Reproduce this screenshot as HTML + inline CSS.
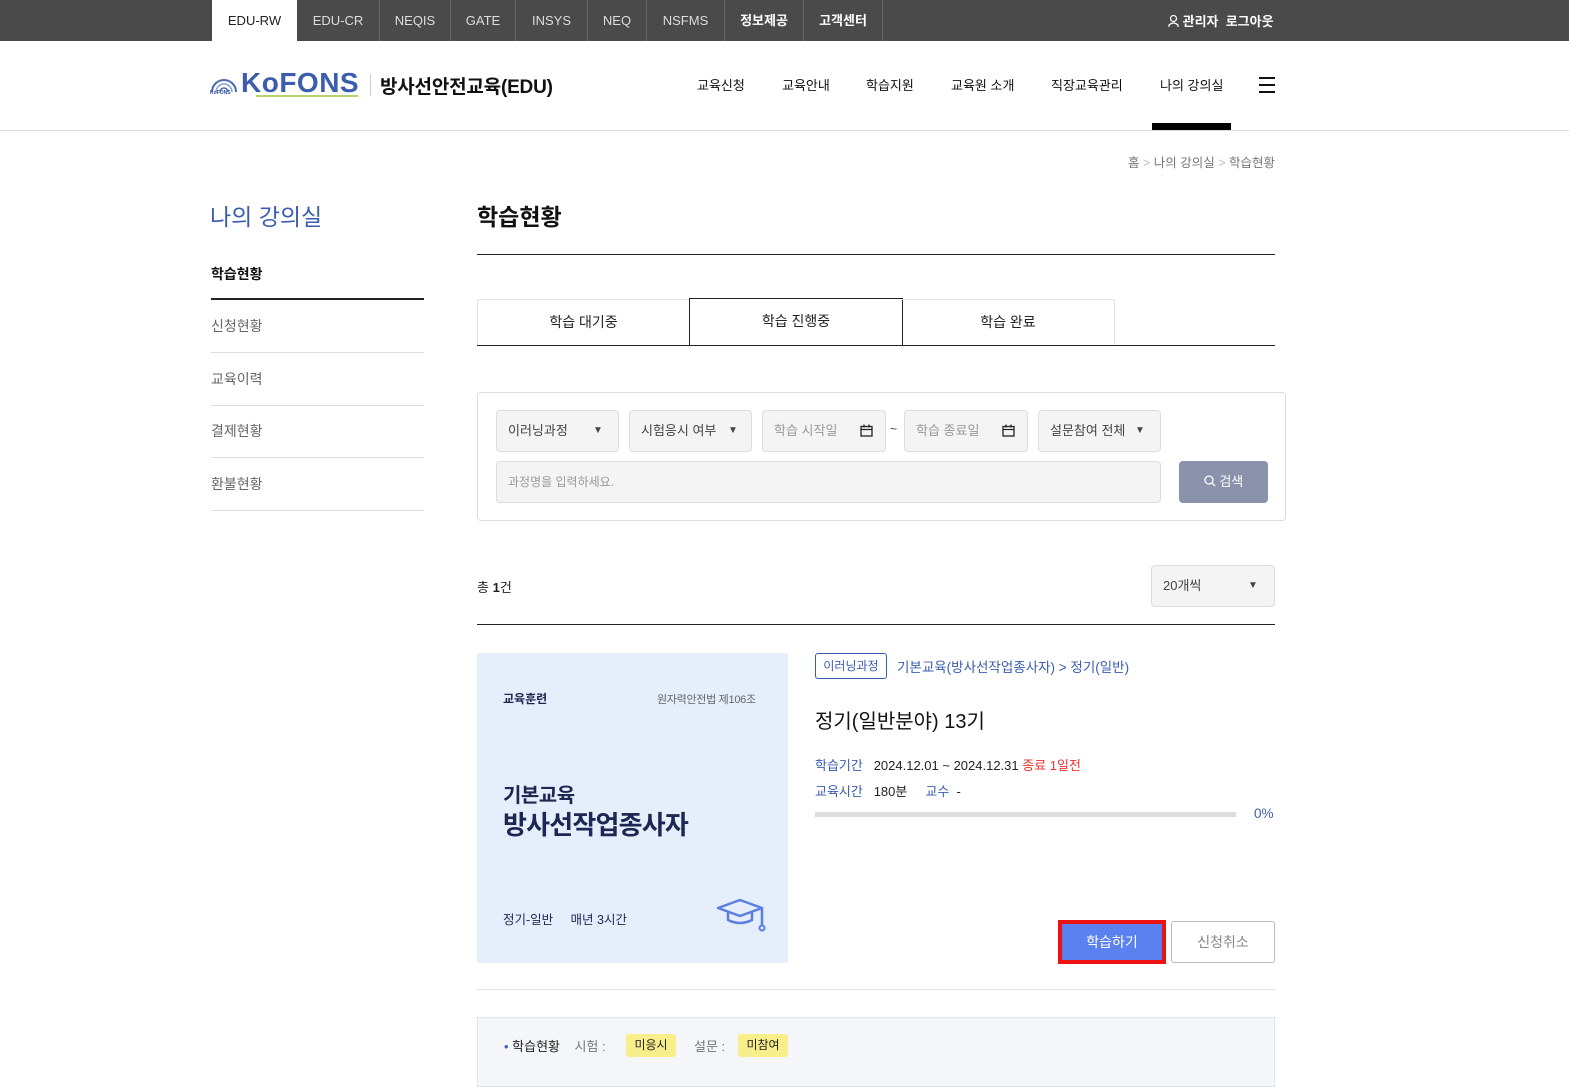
<!DOCTYPE html>
<html><head><meta charset="utf-8"><style>
*{margin:0;padding:0;box-sizing:border-box}
body{width:1569px;height:1080px;overflow:hidden;background:#fff;font-family:"Liberation Sans","Noto Sans CJK KR",sans-serif;color:#222;position:relative}
.a{position:absolute;white-space:nowrap}
.top{left:0;top:0;width:1569px;height:41px;background:#4a4a4a}
.tab{top:0;height:41px;line-height:41px;text-align:center;color:#ddd;font-size:13px;border-right:1px solid #666}
.sel{border:1px solid #ddd;border-radius:4px;background:#f4f4f4;height:42px;font-size:13px;color:#444;line-height:40px;padding-left:11px}
.ph{color:#999}
</style></head><body>
<div class="a top"></div>
<div class="a tab" style="left:212px;width:85px;background:#fff;color:#222;border:none">EDU-RW</div>
<div class="a tab" style="left:297px;width:83px">EDU-CR</div>
<div class="a tab" style="left:380px;width:71px">NEQIS</div>
<div class="a tab" style="left:451px;width:65px">GATE</div>
<div class="a tab" style="left:516px;width:72px">INSYS</div>
<div class="a tab" style="left:588px;width:59px">NEQ</div>
<div class="a tab" style="left:647px;width:78px">NSFMS</div>
<div class="a tab" style="left:725px;width:79px;color:#fff;font-weight:bold">정보제공</div>
<div class="a tab" style="left:804px;width:79px;color:#fff;font-weight:bold">고객센터</div>
<div class="a" style="left:1168px;top:11px;font-size:13px;color:#fff;font-weight:bold"><svg width="11" height="12" viewBox="0 0 11 12" style="vertical-align:-1px"><circle cx="5.5" cy="3.5" r="3" fill="none" stroke="#fff" stroke-width="1.2"/><path d="M1 12 L1 10 Q5.5 6 10 10 L10 12" fill="none" stroke="#fff" stroke-width="1.2"/></svg> 관리자 &nbsp;로그아웃</div>

<svg class="a" style="left:210px;top:72px" width="28" height="24" viewBox="0 0 28 24"><path d="M2 20 A12 12 0 0 1 26 20" fill="none" stroke="#4a6bb5" stroke-width="2"/><path d="M6 20 A8 8 0 0 1 22 20" fill="none" stroke="#8aa0cc" stroke-width="1.5"/><path d="M10 20 A4 4 0 0 1 18 20" fill="none" stroke="#4a6bb5" stroke-width="1.5"/></svg>
<div class="a" style="left:210px;top:90px;font-size:5px;color:#2c4d9c;font-weight:bold">KoFONS</div>
<div class="a" style="left:241px;top:67px;font-size:28px;font-weight:bold;color:#3a5daf;letter-spacing:0.5px">KoFONS</div>
<div class="a" style="left:256px;top:95px;width:102px;height:2px;background:#b6d36b"></div>
<div class="a" style="left:370px;top:74px;width:1px;height:22px;background:#ccc"></div>
<div class="a" style="left:380px;top:72px;font-size:19px;font-weight:bold;color:#111;letter-spacing:-0.2px">방사선안전교육(EDU)</div>

<div class="a" style="left:697px;top:75px;font-size:13px;color:#111">교육신청</div>
<div class="a" style="left:782px;top:75px;font-size:13px;color:#111">교육안내</div>
<div class="a" style="left:866px;top:75px;font-size:13px;color:#111">학습지원</div>
<div class="a" style="left:951px;top:75px;font-size:13px;color:#111">교육원 소개</div>
<div class="a" style="left:1051px;top:75px;font-size:13px;color:#111">직장교육관리</div>
<div class="a" style="left:1160px;top:75px;font-size:13px;color:#111">나의 강의실</div>
<div class="a" style="left:1259px;top:77px;width:16px;height:2px;background:#111"></div>
<div class="a" style="left:1259px;top:84px;width:16px;height:2px;background:#111"></div>
<div class="a" style="left:1259px;top:91px;width:16px;height:2px;background:#111"></div>
<div class="a" style="left:1152px;top:123px;width:79px;height:7px;background:#000"></div>
<div class="a" style="left:0;top:130px;width:1569px;height:1px;background:#ddd"></div>

<div class="a" style="right:294px;top:152px;font-size:12.5px;color:#777">홈 <span style="color:#bbb">&gt;</span> 나의 강의실 <span style="color:#bbb">&gt;</span> 학습현황</div>

<div class="a" style="left:210px;top:198px;font-size:23px;color:#3a5daf">나의 강의실</div>
<div class="a" style="left:211px;top:264px;font-size:14px;color:#111;font-weight:bold">학습현황</div>
<div class="a" style="left:211px;top:298px;width:213px;height:2px;background:#222"></div>
<div class="a" style="left:211px;top:316px;font-size:14px;color:#666">신청현황</div>
<div class="a" style="left:211px;top:352px;width:213px;height:1px;background:#ddd"></div>
<div class="a" style="left:211px;top:369px;font-size:14px;color:#666">교육이력</div>
<div class="a" style="left:211px;top:405px;width:213px;height:1px;background:#ddd"></div>
<div class="a" style="left:211px;top:421px;font-size:14px;color:#666">결제현황</div>
<div class="a" style="left:211px;top:457px;width:213px;height:1px;background:#ddd"></div>
<div class="a" style="left:211px;top:474px;font-size:14px;color:#666">환불현황</div>
<div class="a" style="left:211px;top:510px;width:213px;height:1px;background:#ddd"></div>

<div class="a" style="left:477px;top:198px;font-size:23px;color:#111;font-weight:bold">학습현황</div>
<div class="a" style="left:477px;top:254px;width:798px;height:1px;background:#222"></div>

<div class="a" style="left:477px;top:299px;width:213px;height:47px;border:1px solid #e3e3e3;border-bottom:none;text-align:center;line-height:45px;font-size:14px">학습 대기중</div>
<div class="a" style="left:689px;top:298px;width:214px;height:48px;border:1px solid #222;border-bottom:none;text-align:center;line-height:44px;font-size:14px;background:#fff">학습 진행중</div>
<div class="a" style="left:902px;top:299px;width:213px;height:47px;border:1px solid #e3e3e3;border-bottom:none;border-left:none;text-align:center;line-height:45px;font-size:14px">학습 완료</div>
<div class="a" style="left:477px;top:345px;width:798px;height:1px;background:#222"></div>

<div class="a" style="left:477px;top:392px;width:809px;height:129px;border:1px solid #ddd;border-radius:4px"></div>
<div class="a sel" style="left:496px;top:410px;width:123px">이러닝과정<span class="a" style="left:96px;font-size:10px">▼</span></div>
<div class="a sel" style="left:629px;top:410px;width:123px">시험응시 여부<span class="a" style="left:98px;font-size:10px">▼</span></div>
<div class="a sel ph" style="left:762px;top:410px;width:124px">학습 시작일<svg class="a" style="left:97px;top:13px" width="13" height="13" viewBox="0 0 13 13"><rect x="1" y="2.5" width="11" height="9.5" fill="none" stroke="#222" stroke-width="1.3"/><path d="M1 5.5H12M4 0.5V3.5M9 0.5V3.5" stroke="#222" stroke-width="1.3"/></svg></div>
<div class="a" style="left:890px;top:422px;font-size:12px;color:#444">~</div>
<div class="a sel ph" style="left:904px;top:410px;width:124px">학습 종료일<svg class="a" style="left:97px;top:13px" width="13" height="13" viewBox="0 0 13 13"><rect x="1" y="2.5" width="11" height="9.5" fill="none" stroke="#222" stroke-width="1.3"/><path d="M1 5.5H12M4 0.5V3.5M9 0.5V3.5" stroke="#222" stroke-width="1.3"/></svg></div>
<div class="a sel" style="left:1038px;top:410px;width:123px">설문참여 전체<span class="a" style="left:96px;font-size:10px">▼</span></div>
<div class="a sel ph" style="left:496px;top:461px;width:665px;font-size:12px">과정명을 입력하세요.</div>
<div class="a" style="left:1179px;top:461px;width:89px;height:42px;border-radius:4px;background:#8a93ab;color:#fff;font-size:13px;text-align:center;line-height:42px"><svg width="12" height="12" viewBox="0 0 12 12" style="vertical-align:-1px"><circle cx="5" cy="5" r="4" fill="none" stroke="#fff" stroke-width="1.3"/><path d="M8 8L11 11" stroke="#fff" stroke-width="1.3"/></svg> 검색</div>

<div class="a" style="left:477px;top:577px;font-size:13px;color:#222">총 <b>1</b>건</div>
<div class="a sel" style="left:1151px;top:565px;width:124px;height:42px;background:#f4f4f4">20개씩<span class="a" style="left:96px;font-size:10px">▼</span></div>
<div class="a" style="left:477px;top:624px;width:798px;height:1px;background:#222"></div>

<div class="a" style="left:477px;top:653px;width:311px;height:310px;background:#e5eefb"></div>
<div class="a" style="left:503px;top:690px;font-size:12px;font-weight:bold;color:#1c2752">교육훈련</div>
<div class="a" style="left:657px;top:691px;font-size:11px;color:#666;letter-spacing:-0.3px">원자력안전법 제106조</div>
<div class="a" style="left:503px;top:779px;font-size:20px;font-weight:bold;color:#1c2752;letter-spacing:-0.5px">기본교육</div>
<div class="a" style="left:503px;top:805px;font-size:26px;font-weight:bold;color:#1c2752;letter-spacing:-0.8px">방사선작업종사자</div>
<div class="a" style="left:503px;top:909px;font-size:12.5px;color:#1c2752">정기-일반 &nbsp;&nbsp;&nbsp;&nbsp;매년 3시간</div>
<svg class="a" style="left:716px;top:898px" width="54" height="34" viewBox="0 0 54 34"><path d="M2 10 L24 2 L46 10 L24 18 Z" fill="none" stroke="#5b7fe0" stroke-width="2.5" stroke-linejoin="round"/><path d="M12 14 V22 Q24 28 36 22 V14" fill="none" stroke="#5b7fe0" stroke-width="2.5"/><path d="M46 10 V28" stroke="#5b7fe0" stroke-width="2.5"/><circle cx="46" cy="30" r="2.5" fill="none" stroke="#5b7fe0" stroke-width="2"/></svg>

<div class="a" style="left:815px;top:653px;width:72px;height:26px;border:1px solid #3a5daf;border-radius:3px;font-size:12px;color:#3a5daf;text-align:center;line-height:24px">이러닝과정</div>
<div class="a" style="left:897px;top:656px;font-size:13.5px;color:#3a5daf">기본교육(방사선작업종사자) &gt; 정기(일반)</div>
<div class="a" style="left:815px;top:705px;font-size:20px;color:#111">정기(일반분야) 13기</div>
<div class="a" style="left:815px;top:755px;font-size:13px;color:#3a5daf">학습기간 &nbsp;&nbsp;<span style="color:#222">2024.12.01 ~ 2024.12.31</span> <span style="color:#e33">종료 1일전</span></div>
<div class="a" style="left:815px;top:781px;font-size:13px;color:#3a5daf">교육시간 &nbsp;&nbsp;<span style="color:#222">180분</span> &nbsp;&nbsp;&nbsp;&nbsp;교수 &nbsp;<span style="color:#222">-</span></div>
<div class="a" style="left:815px;top:812px;width:421px;height:5px;background:#ddd"></div>
<div class="a" style="left:1254px;top:806px;font-size:13.5px;color:#3a5daf">0%</div>
<div class="a" style="left:1058px;top:920px;width:108px;height:44px;border:3px solid #e11;background:#5b80ef;color:#fff;font-size:14px;text-align:center;line-height:38px;box-shadow:inset 0 0 0 1px #e11">학습하기</div>
<div class="a" style="left:1171px;top:921px;width:104px;height:42px;border:1px solid #bbb;border-radius:3px;color:#888;font-size:14px;text-align:center;line-height:40px">신청취소</div>
<div class="a" style="left:477px;top:989px;width:798px;height:1px;background:#e3e3e3"></div>

<div class="a" style="left:477px;top:1017px;width:798px;height:70px;background:#f4f6f9;border:1px solid #dfe5ef"></div>
<div class="a" style="left:504px;top:1036px;font-size:13px;color:#222"><span style="color:#3a5daf">•</span> 학습현황 &nbsp;&nbsp;&nbsp;<span style="color:#777">시험 :</span></div>
<div class="a" style="left:626px;top:1034px;width:50px;height:23px;background:#f8ee8a;border-radius:3px;font-size:12px;text-align:center;line-height:23px">미응시</div>
<div class="a" style="left:694px;top:1036px;font-size:13px;color:#777">설문 :</div>
<div class="a" style="left:738px;top:1034px;width:50px;height:23px;background:#f8ee8a;border-radius:3px;font-size:12px;text-align:center;line-height:23px">미참여</div>
</body></html>
